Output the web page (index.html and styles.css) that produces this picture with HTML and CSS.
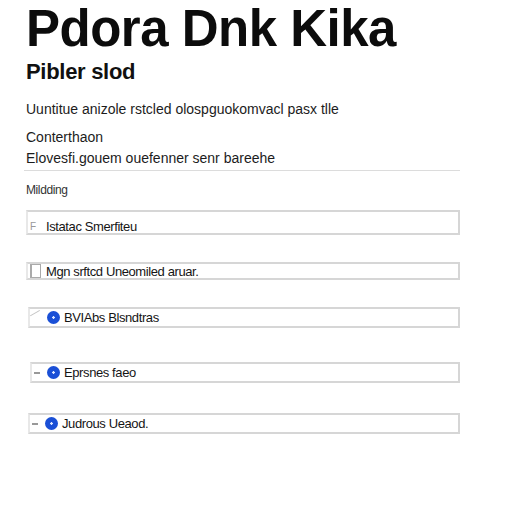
FILE: index.html
```html
<!DOCTYPE html>
<html>
<head>
<meta charset="utf-8">
<link rel="stylesheet" href="styles.css">
</head>
<body>
<main class="page">
  <h1 class="title">Pdora Dnk Kika</h1>
  <h2 class="subtitle">Pibler slod</h2>
  <p class="lead">Uuntitue anizole rstcled olospguokomvacl pasx tlle</p>
  <p class="label">Conterthaon</p>
  <p class="desc">Elovesfi.gouem ouefenner senr bareehe</p>
  <hr class="sep">
  <p class="small">Mildding</p>
  <ul class="options">
    <li class="opt opt-a"><span class="mark mark-f">F</span><span class="opt-text">Istatac Smerfiteu</span></li>
    <li class="opt opt-b"><span class="mark mark-box"></span><span class="opt-text">Mgn srftcd Uneomiled aruar.</span></li>
    <li class="opt opt-c"><span class="mark mark-slash"></span><span class="dot"></span><span class="opt-text">BVIAbs Blsndtras</span></li>
    <li class="opt opt-d"><span class="mark mark-dash"></span><span class="dot"></span><span class="opt-text">Eprsnes faeo</span></li>
    <li class="opt opt-e"><span class="mark mark-dash"></span><span class="dot"></span><span class="opt-text">Judrous Ueaod.</span></li>
  </ul>
</main>
</body>
</html>
```
FILE: styles.css
```css
html, body {
  margin: 0;
  padding: 0;
  background: #ffffff;
}
body {
  font-family: "Liberation Sans", Arial, sans-serif;
  color: #141414;
}
.page {
  padding: 3px 52px 0 26px;
}
.title {
  margin: 0;
  font-size: 51px;
  line-height: 51px;
  font-weight: 700;
  letter-spacing: -0.5px;
  color: #0c0c0c;
}
.subtitle {
  margin: 5px 0 0;
  font-size: 22px;
  line-height: 26px;
  font-weight: 700;
  letter-spacing: -0.3px;
  color: #111;
}
.lead {
  margin: 15px 0 0;
  font-size: 14px;
  line-height: 18px;
  color: #1c1c1c;
}
.label {
  margin: 10px 0 0;
  font-size: 14px;
  line-height: 18px;
  color: #1c1c1c;
}
.desc {
  margin: 3px 0 0;
  font-size: 14px;
  line-height: 18px;
  color: #1c1c1c;
}
.sep {
  margin: 3px 0 0 -2px;
  border: 0;
  height: 1px;
  background: #dcdcdc;
}
.small {
  margin: 11px 0 0;
  font-size: 12px;
  line-height: 16px;
  letter-spacing: -0.4px;
  color: #333;
}
.options {
  list-style: none;
  margin: 12px 0 0;
  padding: 0;
}
.opt {
  display: flex;
  align-items: center;
  gap: 4px;
  height: 21px;
  border: 2px solid #d6d6d6;
  border-left-color: #e8e8e8;
  box-sizing: border-box;
  padding-left: 2px;
  font-size: 13px;
  letter-spacing: -0.4px;
  color: #111;
}
.opt-a { height: 25px; padding-top: 8px; margin-top: 0; }
.opt-b { height: 18px; margin-top: 27px; }
.opt-c { margin-top: 27px; margin-left: 2px; }
.opt-d { margin-top: 34px; margin-left: 4px; }
.opt-e { margin-top: 30px; margin-left: 2px; }
.mark {
  flex: none;
  display: inline-block;
}
.mark-f {
  width: 12px;
  font-size: 10px;
  color: #999;
}
.mark-box {
  width: 8px;
  height: 12px;
  border: 1px solid #aaa;
  border-left-width: 2px;
  margin-right: 1px;
}
.mark-slash {
  width: 11px;
  height: 10px;
  border-top: 1px solid #c4c4c4;
  transform: rotate(-30deg);
}
.mark-dash {
  width: 6px;
  height: 2px;
  background: #999;
  margin-right: 3px;
}
.dot {
  flex: none;
  width: 13px;
  height: 13px;
  border-radius: 50%;
  background: radial-gradient(circle at 50% 50%, #dfe8ff 0 1px, #1a4fd6 1.5px);
}
.opt-text {
  color: #151515;
}
```
